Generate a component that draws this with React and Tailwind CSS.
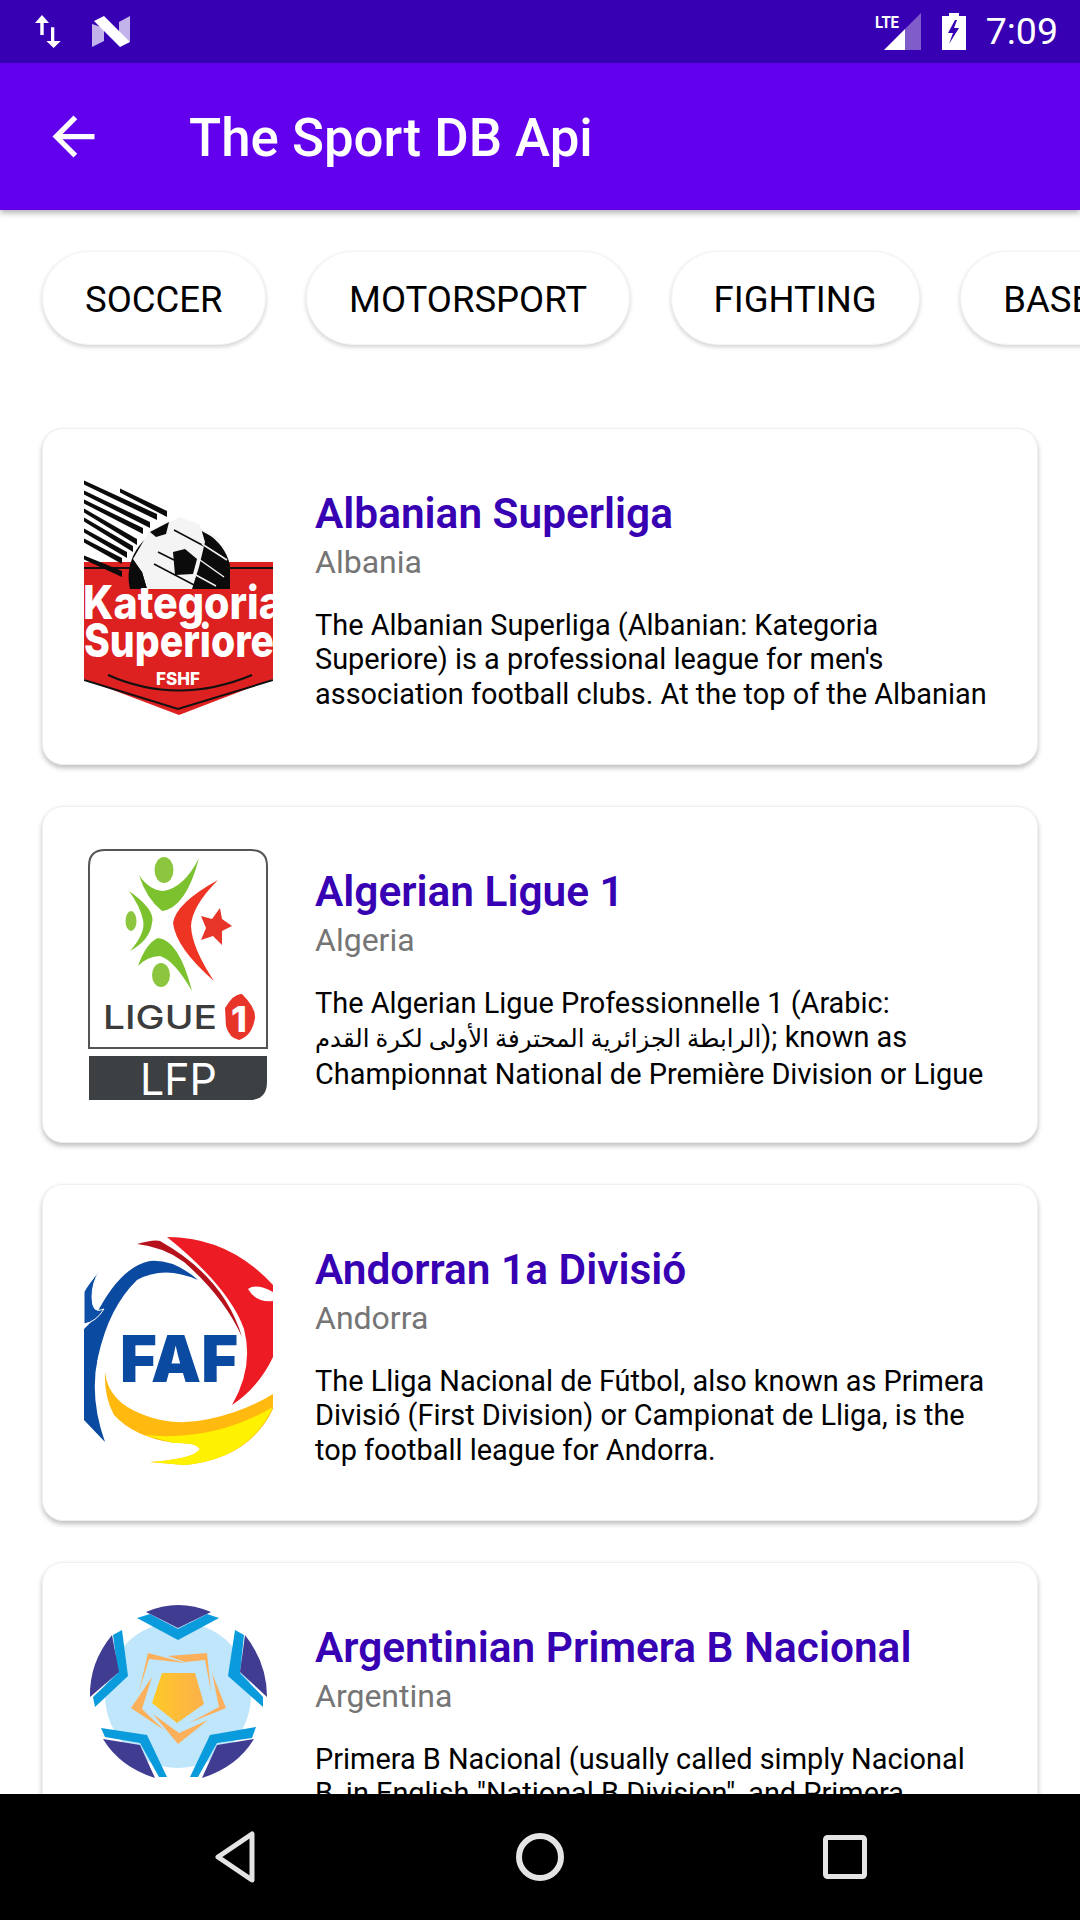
const leagues = [
  {
    name: "Albanian Superliga",
    country: "Albania",
    desc: "The Albanian Superliga (Albanian: Kategoria Superiore) is a professional league for men's association football clubs. At the top of the Albanian",
    Logo: () => <KategoriaLogo />,
  },
  {
    name: "Algerian Ligue 1",
    country: "Algeria",
    desc: (
      <>
        The Algerian Ligue Professionnelle 1 (Arabic:
        <br />
        <bdi dir="rtl" className="text-[24.4px]">الرابطة الجزائرية المحترفة الأولى لكرة القدم</bdi>); known as
        <br />
        Championnat National de Première Division or Ligue
      </>
    ),
    Logo: () => <LigueLogo />,
  },
  {
    name: "Andorran 1a Divisió",
    country: "Andorra",
    desc: "The Lliga Nacional de Fútbol, also known as Primera Divisió (First Division) or Campionat de Lliga, is the top football league for Andorra.",
    Logo: () => <FafLogo />,
  },
  {
    name: "Argentinian Primera B Nacional",
    country: "Argentina",
    desc: 'Primera B Nacional (usually called simply Nacional B, in English "National B Division", and Primera',
    Logo: () => <PrimeraLogo />,
  },
];

const sports = ["SOCCER", "MOTORSPORT", "FIGHTING", "BASEBALL"];

// speed lines behind the ball
const streaks = [
  [0, 0, 73, 35],
  [0, 10, 66, 43],
  [0, 19, 59, 49],
  [0, 28, 53, 60],
  [0, 37, 49, 67],
  [0, 48, 43, 73],
  [0, 58, 38, 79],
  [36, 8, 83, 32],
  [0, 75, 38, 92],
];

// every logo sits in the same 189x252 image box
const KategoriaLogo = () => (
  <svg viewBox="0 0 189 252" className="w-[189px] h-[252px]">
    <g transform="translate(0 12)">
      <path d="M0 80H189V197L95 233L0 197Z" fill="#dd2020" />
      <path d="M0 86H189" stroke="#111" strokeWidth="2" fill="none" />
      <path d="M0 198L94 227L189 198" stroke="#111" strokeWidth="2" fill="none" />
      <path d="M24 193Q94 224 168 193" stroke="#111" strokeWidth="2" fill="none" />
      <path d="M46 107A50 50 0 0 1 146 83V107Z" fill="#0b0b0b" />
      <path d="M49 77L66 48L86 40L96 35L116 43L121 60L115 85L108 107H63L58 90Z" fill="#f4f4f4" />
      <path d="M66 50L85 40L82 52L72 55Z" fill="#0b0b0b" />
      <path d="M89 70L101 67L113 77L109 92L91 93Z" fill="#0b0b0b" />
      <path d="M46 82L58 90L63 107H48Z" fill="#0b0b0b" />
      <path d="M90 48L120 64M74 70L90 78M70 82L112 104" stroke="#0b0b0b" strokeWidth="1.5" />
      <path d="M112 45L136 58M118 62L143 78M116 78L140 95M110 92L132 104" stroke="#f0f0f0" strokeWidth="1.5" />
      {streaks.map(([x1, y1, x2, y2]) => (
        <path key={`${x1}-${y1}`} d={`M${x1} ${y1 - 1.5}L${x2} ${y2 - 3}V${y2 + 3}L${x1} ${y1 + 2.5}Z`} fill="#0b0b0b" />
      ))}
      <text x="-1" y="137" fontFamily="Inter, sans-serif" fontWeight="800" fontSize="46" fill="#fff" textLength="200" lengthAdjust="spacingAndGlyphs">Kategoria</text>
      <text x="0" y="175" fontFamily="Inter, sans-serif" fontWeight="800" fontSize="46" fill="#fff" textLength="190" lengthAdjust="spacingAndGlyphs">Superiore</text>
      <text x="94" y="203" textAnchor="middle" fontFamily="Inter, sans-serif" fontWeight="800" fontSize="17" fill="#fff">FSHF</text>
    </g>
  </svg>
);

const LigueLogo = () => (
  <svg viewBox="0 0 189 252" className="w-[189px] h-[252px]">
    <path d="M5 200V18Q5 2 21 2H167Q183 2 183 18V200Z" fill="#fff" stroke="#555" strokeWidth="2" />
    <ellipse cx="80" cy="22" rx="9.5" ry="13" fill="#8cc63f" />
    <path d="M55 27Q62 50 78 63Q102 60 115 10Q100 40 79 43Q65 42 55 27Z" fill="#7cc22e" />
    <path d="M45 43Q72 62 68 75Q66 92 46 103Q62 85 59 72Q56 58 45 43Z" fill="#7cc22e" />
    <ellipse cx="47" cy="73" rx="5.5" ry="10" fill="#8cc63f" />
    <path d="M54 118Q62 95 74 90Q95 92 108 143Q90 112 76 108Q64 108 54 118Z" fill="#7cc22e" />
    <ellipse cx="77" cy="127" rx="9" ry="12" fill="#8cc63f" />
    <path d="M134 32Q92 55 89 75Q92 100 130 133Q108 100 107 78Q108 58 134 32Z" fill="#ee3524" />
    <path d="M136 60L138 71L148 78L138 83L138 97L129 88L117 92L122 80L117 68L128 71Z" fill="#e8352a" />
    <text x="19" y="181" fontFamily="Inter, sans-serif" fontWeight="500" fontSize="33" fill="#3c3c3c" textLength="114" lengthAdjust="spacingAndGlyphs">LIGUE</text>
    <path d="M141 160Q150 145 158 146Q172 160 171 170Q168 188 155 192Q145 190 142 178Z" fill="#e8352a" />
    <text x="155" y="184" textAnchor="middle" fontFamily="Inter, sans-serif" fontWeight="800" fontSize="36" fill="#fff">1</text>
    <path d="M5 208H183V234Q183 252 165 252H5Z" fill="#3c4043" />
    <text x="56" y="247" fontFamily="Inter, sans-serif" fontWeight="400" fontSize="44" fill="#fff" textLength="77" lengthAdjust="spacingAndGlyphs">LFP</text>
  </svg>
);

const FafLogo = () => (
  <svg viewBox="0 0 189 252" className="w-[189px] h-[252px]">
    <g transform="translate(0 11)">
      <path d="M83 0Q145 0 189 48V55Q172 46 164 52Q172 66 189 64V120Q175 150 148 168Q170 130 160 92Q145 50 83 0Z" fill="#ed1c24" />
      <path d="M53 7Q70 2 76 4Q140 40 158 100Q140 60 100 25Q80 10 53 7Z" fill="#b5121b" />
      <path d="M114 43Q90 22 66 24Q35 30 10 82L0 92V183L21 205Q5 160 14 120Q25 70 53 43Q80 28 114 43Z" fill="#0a4aa0" />
      <path d="M43 77Q22 100 14 125" stroke="#fff" strokeWidth="2" fill="none" />
      <path d="M16 33Q2 50 0 55V87Q12 85 20 72Q8 78 8 60Q8 45 16 33Z" fill="#0d4ea6" stroke="#fff" strokeWidth="1" />
      <path d="M21 135Q24 165 60 178Q90 190 125 182Q160 175 189 157V172Q165 222 100 228L66 225Q110 222 116 212Q112 205 90 206Q50 200 30 178Q20 160 21 135Z" fill="#ffb90f" />
      <path d="M189 170Q165 222 100 228L66 225Q110 222 116 212Q112 205 90 206L60 198Q130 205 189 170Z" fill="#fff200" />
      <text x="36" y="145" fontFamily="Inter, sans-serif" fontWeight="900" fontSize="64" fill="#0a4aa0" textLength="118" lengthAdjust="spacingAndGlyphs">FAF</text>
    </g>
  </svg>
);

const PrimeraLogo = () => (
  <svg viewBox="0 0 189 252" className="w-[189px] h-[252px]">
    <defs>
      <linearGradient id="pentagon" x1="0" x2="1" y1="0" y2="0">
        <stop offset="0" stopColor="#ffc926" />
        <stop offset="1" stopColor="#fbb04c" />
      </linearGradient>
    </defs>
    <g transform="translate(0 1)">
      <circle cx="94" cy="90" r="73" fill="#bfe6fa" />
      <path d="M53 13L66 9L94 24L123 9L135 13L94 35Z" fill="#0a9bdc" />
      <path d="M62 7Q94 -7 127 7L94 23Z" fill="#3f3c92" />
      <path d="M38 25L44 71L11 102L9 92L34 68L29 30Z" fill="#0a9bdc" />
      <path d="M28 30Q5 58 6 92L35 67Z" fill="#3f3c92" />
      <path d="M151 25L144 71L179 102L179 92L156 68L160 30Z" fill="#0a9bdc" />
      <path d="M161 30Q183 58 183 92L156 67Z" fill="#3f3c92" />
      <path d="M17 123L63 130L83 172L75 172L56 138L21 132Z" fill="#0a9bdc" />
      <path d="M19 134Q36 162 71 173L56 140Z" fill="#3f3c92" />
      <path d="M172 122L126 130L106 172L114 172L133 138L168 133Z" fill="#0a9bdc" />
      <path d="M170 134Q153 162 118 173L133 140Z" fill="#3f3c92" />
      <path d="M64 48L102 58L65 54L55 87Z" fill="#fdb05c" />
      <path d="M84 51L123 48L127 87L121 55L101 57Z" fill="#fdb05c" />
      <path d="M128 68L142 103L105 118L135 102Z" fill="#fdb05c" />
      <path d="M69 109L95 128L124 115L94 139Z" fill="#fdb05c" />
      <path d="M68 72L47 103L80 125L58 104Z" fill="#fdb05c" />
      <path d="M78 68L111 68L120 99L93 118L68 98Z" fill="url(#pentagon)" />
    </g>
  </svg>
);

const StatusBar = () => (
  <div className="h-[63px] bg-[#3700b3] flex items-center pl-[35px] pr-[22px] shrink-0">
    <svg viewBox="0 0 26 33" className="w-[26px] h-[33px]" fill="#fff">
      <path d="M7 0L14 8H8.7V20H5.3V8H0Z" />
      <path d="M16 12.3H19.3V26H25.7L18.7 33L11.3 26H16Z" />
    </svg>
    <svg viewBox="0 0 38 31" className="w-[38px] h-[31px] ml-[31px]">
      <path d="M0 8V31L12 25V12Z" fill="#c2b3ea" />
      <path d="M27 6L38 0V26L27 19Z" fill="#c2b3ea" />
      <path d="M2 5L12 0L38 26L28 31Z" fill="#fff" />
    </svg>
    <div className="flex-1" />
    <svg viewBox="0 0 46 38" className="w-[46px] h-[38px]">
      <path d="M46 0V37H30V16Z" fill="#7f5cc9" />
      <path d="M30 16V37H9Z" fill="#fff" />
      <text x="0" y="15" fontFamily="Roboto, sans-serif" fontWeight="700" fontSize="16" fill="#fff" textLength="24" lengthAdjust="spacingAndGlyphs">LTE</text>
    </svg>
    <svg viewBox="0 0 24 38" className="w-[24px] h-[38px] ml-[21px]">
      <path d="M7 0H17V3H24V37H0V3H7Z" fill="#fff" />
      <path d="M13 7L6 20H11L7 31L17 15H12L15 7Z" fill="#3700b3" />
    </svg>
    <span className="ml-[20px] text-white text-[37.5px] font-['Roboto',sans-serif] leading-none">7:09</span>
  </div>
);

const AppBar = () => (
  <div className="h-[147px] bg-[#6200ee] flex items-center shrink-0 shadow-[0_3px_6px_rgba(0,0,0,0.3)] z-10">
    <div className="w-[190px] pl-[42px]">
      <svg viewBox="0 0 24 24" className="w-[63px] h-[63px]" fill="#fff">
        <path d="M20 11H7.83l5.59-5.59L12 4l-8 8 8 8 1.41-1.41L7.83 13H20v-2z" />
      </svg>
    </div>
    <span className="text-white text-[52.8px] font-medium font-['Roboto',sans-serif] pt-[5px] -ml-[1px]">The Sport DB Api</span>
  </div>
);

const Chip = ({ label }) => (
  <div className="h-[94px] px-[42px] pt-[5px] rounded-full bg-white shrink-0 flex items-center text-[36.5px] text-black border border-[#f4f4f4] shadow-[0_2px_4px_rgba(0,0,0,0.18)]">
    {label}
  </div>
);

const LeagueCard = ({ league }) => (
  <div className="h-[337px] mx-[42px] shrink-0 rounded-[21px] bg-white border border-[#f0f0f0] shadow-[0_3px_5px_rgba(0,0,0,0.25)] flex items-start pl-[41px] pr-[42px]">
    <div className="w-[189px] h-[252px] mt-[41px] shrink-0">
      <league.Logo />
    </div>
    <div className="ml-[42px] pt-[60px] min-w-0">
      <div className="text-[42.4px] leading-[49px] font-semibold text-[#3700b3]">{league.name}</div>
      <div className="text-[32px] leading-[49px] text-[#757575]">{league.country}</div>
      <div className="mt-[21px] text-[28.9px] leading-[34.4px] text-black">{league.desc}</div>
    </div>
  </div>
);

export default function App() {
  return (
    <div className="w-[1080px] h-[1920px] overflow-hidden flex flex-col bg-white font-['Roboto','DejaVu_Sans',sans-serif]">
      <StatusBar />
      <AppBar />
      <div className="flex-1 min-h-0 overflow-hidden flex flex-col">
        <div className="flex gap-[40.5px] pl-[42px] pt-[41px] pb-[83px] overflow-hidden shrink-0">
          {sports.map((s) => (
            <Chip key={s} label={s} />
          ))}
        </div>
        <div className="flex flex-col gap-[41px]">
          {leagues.map((l) => (
            <LeagueCard key={l.name} league={l} />
          ))}
        </div>
      </div>
      <div className="h-[126px] bg-black shrink-0 flex items-center pl-[215px]">
        <svg viewBox="0 0 40 52" className="w-[40px] h-[52px]" fill="none" stroke="#e4e4e4" strokeWidth="5" strokeLinejoin="round">
          <path d="M37 3V49L3 26Z" />
        </svg>
        <svg viewBox="0 0 48 48" className="w-[48px] h-[48px] ml-[261px]" fill="none" stroke="#e4e4e4" strokeWidth="6">
          <circle cx="24" cy="24" r="21" />
        </svg>
        <svg viewBox="0 0 44 44" className="w-[44px] h-[44px] ml-[259px]" fill="none" stroke="#e4e4e4" strokeWidth="5" strokeLinejoin="round">
          <rect x="2.5" y="2.5" width="39" height="39" rx="2" />
        </svg>
      </div>
    </div>
  );
}
